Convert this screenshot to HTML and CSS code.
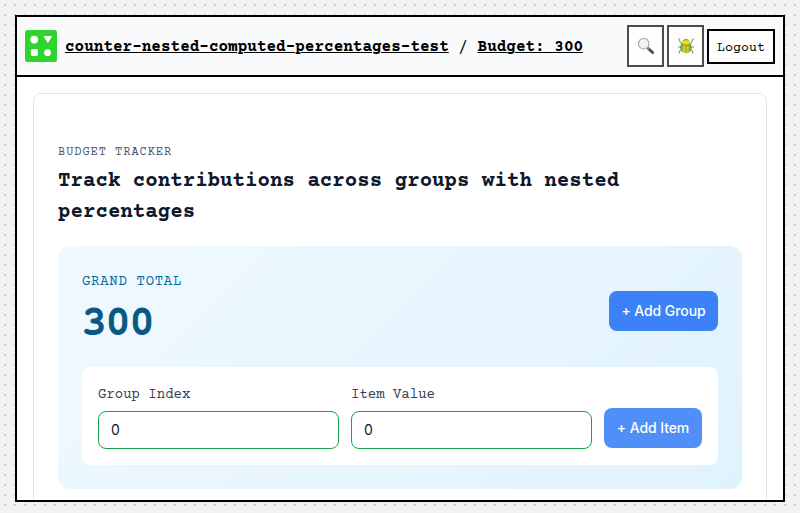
FILE: index.html
```html
<!DOCTYPE html>
<html lang="en">
<head>
<meta charset="utf-8">
<title>Budget: 300</title>
<link rel="stylesheet" href="styles.css">
</head>
<body>
<div class="window">
  <header class="bar">
    <svg class="logo" viewBox="0 0 32 32" aria-hidden="true">
      <rect width="32" height="32" rx="2.5" fill="#2fd52f"/>
      <g fill="#fff"><circle cx="9.2" cy="9.6" r="3.9"/><path d="M19.6 6h6.4q1.3 0 .7 1.1l-3.2 5q-.7 1.1-1.4 0l-3.2-5Q18.300 6 19.600 6z"/><rect x="5.900" y="19" width="7" height="7" rx="1.500"/><circle cx="22.500" cy="22.700" r="3.400"/></g>
    </svg>
    <nav class="crumbs"><a href="#">counter-nested-computed-percentages-test</a> <span class="slash">/</span> <a href="#">Budget: 300</a></nav>
    <div class="actions">
      <button class="tool" aria-label="Search">
        <svg width="18" height="18" viewBox="0 0 18 18">
          <path d="M11 11.300L15.600 15.500" stroke="#454b4e" stroke-width="2.900" stroke-linecap="round"/>
          <path d="M10.200 10.400l1.800 1.700" stroke="#858b8e" stroke-width="1.500"/>
          <circle cx="6.700" cy="6.700" r="5.300" fill="#eef2f5" stroke="#aaaeb1" stroke-width="1.200"/>
          <path d="M3.700 6.200a3.200 3.200 0 0 1 3-2.600" fill="none" stroke="#fff" stroke-width="1.200"/>
        </svg>
      </button>
      <button class="tool" aria-label="Debug">
        <svg width="18" height="18" viewBox="0 0 18 18">
          <defs><linearGradient id="shell"><stop stop-color="#4f9a32"/><stop offset=".35" stop-color="#cfd238"/><stop offset=".6" stop-color="#dfc82c"/><stop offset="1" stop-color="#5b9a2e"/></linearGradient></defs>
          <g fill="none" stroke="#7f9d68" stroke-width="1.100"><path d="M5 7.500L3.200 5 1.800 1.500M13 7.500L14.800 5l1.400-3.500M5 10H.8M13 10h4.200M5 12.500L2.700 14 2 16.500M13 12.500l2.300 1.500.7 2.500"/></g>
          <path d="M5.300 5.500Q5.500 1.900 9 1.900T12.700 5.500z" fill="#93a01d"/>
          <ellipse cx="9" cy="10.300" rx="5.800" ry="5.900" fill="url(#shell)"/>
          <ellipse cx="9" cy="5.300" rx="3.700" ry="2.100" fill="#f5d91f"/>
          <path d="M9 7.500V16M4.200 7.600q4.800 1.500 9.600 0" fill="none" stroke="#77912b" stroke-width=".8"/>
        </svg>
      </button>
      <button class="logout"><span>Logout</span></button>
    </div>
  </header>
  <main class="content">
    <section class="card">
      <p class="eyebrow">BUDGET TRACKER</p>
      <h1>Track contributions across groups with nested percentages</h1>
      <div class="panel">
        <div class="summary">
          <div><div class="total-label">GRAND TOTAL</div><div class="total">300</div></div>
          <button class="primary">+ Add Group</button>
        </div>
        <div class="form">
          <label class="field"><span>Group Index</span><input type="text" value="0"></label>
          <label class="field"><span>Item Value</span><input type="text" value="0"></label>
          <button class="primary item">+ Add Item</button>
        </div>
      </div>
    </section>
  </main>
</div>
</body>
</html>
```
FILE: styles.css
```css
* { box-sizing: border-box; }
body {
  margin: 0;
  padding: 15px 15px 11px;
  height: 513px;
  overflow: hidden;
  background: #f2f2f2 conic-gradient(from 270deg at 2px 2px, #ccc 90deg, transparent 0) 4px 4px / 10px 10px;
  font: 16px/1.5 "Courier Prime", Courier, "Liberation Mono", monospace;
}
button, input { font: inherit; margin: 0; }
.window {
  height: 487px;
  border: 2px solid #000;
  background: #fff;
  overflow: hidden;
}
.bar {
  display: flex;
  align-items: center;
  gap: 8px;
  height: 60px;
  padding: 0 8px;
  border-bottom: 2px solid #000;
  background: #f8fafc;
}
.logo { width: 32px; height: 32px; }
.crumbs { flex: 1; padding-top: 2px; font-weight: 700; white-space: nowrap; }
.crumbs a { color: #000; text-decoration: underline; text-decoration-thickness: 1px; }
.slash { font-weight: 400; }
.actions { display: flex; align-items: center; gap: 3px; }
.tool {
  display: flex;
  align-items: center;
  justify-content: center;
  width: 37px;
  height: 42px;
  padding: 0;
  border: 2px solid #4c4c4d;
  background: #fdfdfe;
}
.logout {
  width: 68px;
  height: 35px;
  padding: 5px 0 0;
  border: 2px solid #000;
  background: #fff;
  color: #000;
  font-size: 13.333px;
}
.content { padding: 16px; }
.card {
  height: 560px;
  padding: 50px 24px 24px;
  border: 1px solid #e2e2e4;
  border-radius: 8px;
}
.eyebrow { margin: 0; font-size: 12px; line-height: 18px; letter-spacing: .08em; color: #475569; }
h1 { margin: 4px 0 18px; font-size: 20.8px; line-height: 31px; color: #0f172a; }
.panel {
  height: 243px;
  padding: 24px;
  border-radius: 12px;
  background: linear-gradient(135deg, #f0f9ff, #e0f2fe);
}
.summary { display: flex; align-items: center; justify-content: space-between; height: 81px; margin-bottom: 16px; }
.total-label { padding-top: 2px; font-size: 14px; line-height: 21px; letter-spacing: .05em; color: #0369a1; }
.total {
  font-family: FreeMono, "Courier Prime", monospace;
  font-size: 40px;
  line-height: 58px;
  font-weight: 700;
  color: #075985;
  -webkit-text-stroke: 1px #075985;
}
.primary {
  width: 109px;
  height: 40px;
  padding: 0;
  border: 0;
  border-radius: 8px;
  background: #3b82f6;
  color: #fff;
  font: 500 14px/20px Inter, sans-serif;
  letter-spacing: -.08px;
}
.item { width: 98px; background: #4f8ff7; }
.form {
  display: flex;
  align-items: flex-end;
  gap: 12px;
  height: 98px;
  padding: 16px;
  border-radius: 8px;
  background: #fff;
}
.form .primary { margin-bottom: 1px; }
.field { flex: 1; min-width: 0; font-size: 14px; line-height: 21px; color: #334155; }
.field span { display: block; margin-bottom: 5px; }
.field input {
  display: block;
  width: 100%;
  height: 38px;
  padding: 0 12px 1px;
  border: 1px solid #16a34a;
  border-radius: 8px;
  background: #fff;
  color: #0f172a;
  font: 14px/20px Inter, sans-serif;
}
```
